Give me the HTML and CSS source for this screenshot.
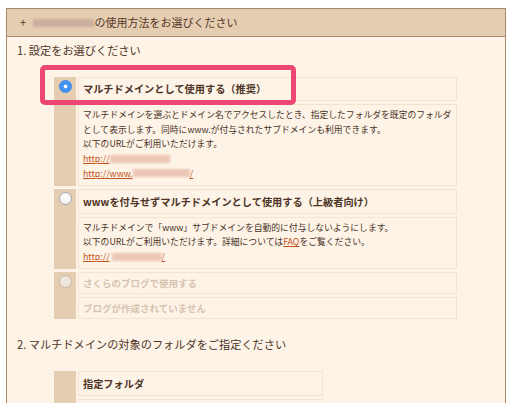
FILE: index.html
```html
<!DOCTYPE html>
<html lang="ja">
<head>
<meta charset="utf-8">
<link rel="stylesheet" href="styles.css">
</head>
<body>
<div class="panel">
  <div class="panel-head">+ <span class="blur blur-head"></span>の使用方法をお選びください</div>
  <div class="panel-body">
    <div class="sec-title">1. 設定をお選びください</div>
    <div class="options">
      <div class="option">
        <div class="side"><span class="radio checked"></span></div>
        <div class="boxes">
          <div class="box title">マルチドメインとして使用する（推奨）</div>
          <div class="box desc">マルチドメインを選ぶとドメイン名でアクセスしたとき、指定したフォルダを既定のフォルダ<br>として表示します。同時にwww.が付与されたサブドメインも利用できます。<br>以下のURLがご利用いただけます。<br><a class="link">http://<span class="blur blur-link w60"></span></a><br><a class="link">http://www.<span class="blur blur-link w57"></span>/</a></div>
        </div>
        <div class="highlight"></div>
      </div>
      <div class="option">
        <div class="side"><span class="radio"></span></div>
        <div class="boxes">
          <div class="box title t2">wwwを付与せずマルチドメインとして使用する（上級者向け）</div>
          <div class="box desc">マルチドメインで「www」サブドメインを自動的に付与しないようにします。<br>以下のURLがご利用いただけます。詳細については<a class="link">FAQ</a>をご覧ください。<br><a class="link">http://<span class="blur blur-link w53"></span>/</a></div>
        </div>
      </div>
      <div class="option disabled">
        <div class="side"><span class="radio off"></span></div>
        <div class="boxes">
          <div class="box title t3">さくらのブログで使用する</div>
          <div class="box title t3">ブログが作成されていません</div>
        </div>
      </div>
    </div>
    <div class="sec-title sec2">2. マルチドメインの対象のフォルダをご指定ください</div>
    <div class="folder">
      <div class="side"></div>
      <div class="boxes narrow">
        <div class="box title t2">指定フォルダ</div>
        <div class="box empty"></div>
      </div>
    </div>
  </div>
</div>
</body>
</html>
```

FILE: styles.css
```css
html, body {
  margin: 0;
  padding: 0;
  background: #ffffff;
  overflow: hidden;
}
body {
  font-family: "Noto Sans CJK JP", "Noto Sans", sans-serif;
  color: #4e3427;
}
.panel {
  margin: 8px 0 0 6px;
  width: 498px;
  height: 400px;
  border: 1px solid #a8896c;
  border-bottom: none;
  background: #fdf3e6;
}
.panel-head {
  height: 27px;
  line-height: 27px;
  padding-left: 13px;
  background: #e5cdb1;
  border-bottom: 1px solid #a8896c;
  font-size: 11px;
  color: #55372a;
}
.blur {
  display: inline-block;
  vertical-align: middle;
  filter: blur(1.2px);
}
.blur-head {
  width: 61px;
  height: 8px;
  margin: 0 1px 2px 4px;
  background: #cdb09e;
}
.blur-link {
  height: 8px;
  margin-bottom: 2px;
  background: #ecc7b6;
}
.w60 { width: 60px; }
.w57 { width: 57px; }
.w53 { width: 50px; margin-left: 2px; }
.panel-body {
  padding: 5px 0 0 10px;
}
.sec-title {
  font-size: 11.2px;
  line-height: 16px;
  color: #4e3427;
}
.sec2 {
  margin-top: 17px;
}
.options {
  margin: 19px 0 0 37px;
  display: flex;
  flex-direction: column;
  gap: 3px;
}
.option, .folder {
  position: relative;
  display: flex;
  gap: 2px;
}
.folder {
  margin: 19px 0 0 37px;
}
.side {
  width: 22px;
  flex: none;
  background: #e5cdb1;
  display: flex;
  justify-content: center;
  align-items: flex-start;
}
.boxes {
  width: 379px;
  display: flex;
  flex-direction: column;
  gap: 3px;
}
.boxes.narrow {
  width: 245px;
}
.box {
  border: 1px solid #f3e4d2;
  background: #fdf3e6;
}
.title {
  font-size: 10.2px;
  font-weight: bold;
  line-height: 22px;
  padding: 0 0 0 4px;
  color: #4e3427;
  white-space: nowrap;
}
.t2 { line-height: 23px; }
.t3 { line-height: 20px; font-size: 9.5px; color: #d7c3b1; }
.desc {
  font-size: 8.8px;
  line-height: 14.7px;
  padding: 3px 4px 3px 4px;
  color: #4a3226;
  white-space: nowrap;
}
.empty {
  height: 20px;
}
.link {
  color: #c2531c;
  text-decoration: underline;
}
.radio {
  display: block;
  box-sizing: border-box;
  width: 13px;
  height: 13px;
  margin-top: 3px;
  border-radius: 50%;
  border: 1px solid #a9a9a9;
  background: radial-gradient(circle at 50% 35%, #ffffff 0%, #f2f2f2 70%, #e2e2e2 100%);
}
.radio.checked {
  border: 1px solid #3386ec;
  background: radial-gradient(circle, #ffffff 0 1.6px, #4394f3 2.2px);
}
.radio.off {
  border: 1px solid #c8b7a5;
  background: #efe6dc;
}
.highlight {
  position: absolute;
  left: -14px;
  top: -12px;
  width: 256px;
  height: 40px;
  box-sizing: border-box;
  border: 5px solid #ec4674;
  border-radius: 5px;
  pointer-events: none;
}
```
